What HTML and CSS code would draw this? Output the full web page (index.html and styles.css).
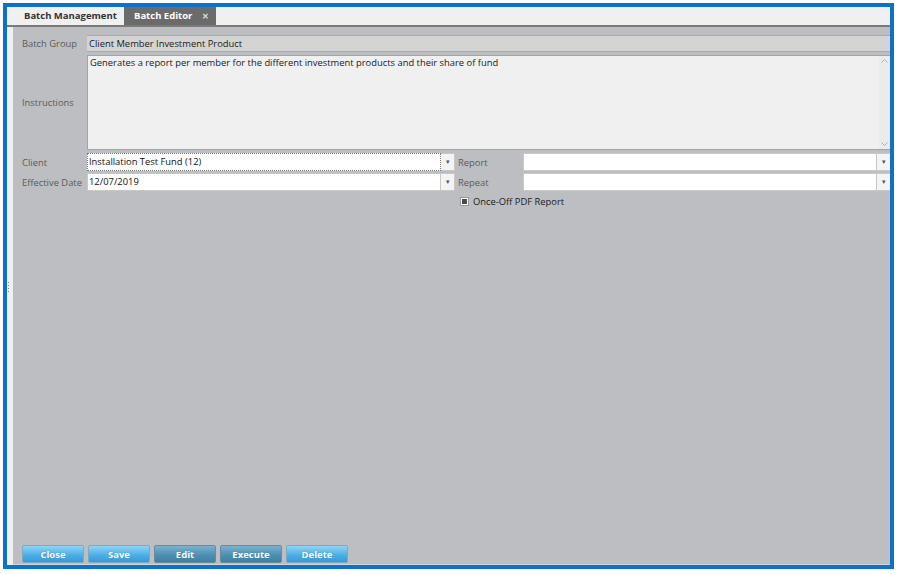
FILE: index.html
```html
<!DOCTYPE html>
<html>
    <head>
        <meta charset="utf-8">
        <title>Batch Editor</title>
        <link rel="stylesheet" href="styles.css">
    </head>
    <body>
        <div class="frame">
            <div class="tabbar">
                <div class="tab">Batch Management</div>
                <div class="tab active">Batch Editor<span class="tab-close">&#x2715;</span></div>
            </div>
            <div class="main">
                <div class="splitter">
                    <span class="grip"></span>
                </div>
                <div class="content">
                    <div class="form">
                        <div class="row">
                            <label class="lbl">Batch Group</label>
                            <div class="readonly">Client Member Investment Product</div>
                        </div>
                        <div class="row tall">
                            <label class="lbl">Instructions</label>
                            <div class="memo">
                                <div class="memo-text">Generates a report per member for the different investment products and their share of fund</div>
                                <div class="scroll">
                                    <svg class="arrow" width="7" height="4" viewBox="0 0 7 4"><path d="M0.5 3.5 L3.5 0.5 L6.5 3.5" fill="none" stroke="#b0b0b0"/></svg>
                                    <svg class="arrow" width="7" height="4" viewBox="0 0 7 4"><path d="M0.5 0.5 L3.5 3.5 L6.5 0.5" fill="none" stroke="#b0b0b0"/></svg>
                                </div>
                            </div>
                        </div>
                        <div class="row pair">
                            <div class="half">
                                <label class="lbl">Client</label>
                                <div class="combo">
                                    <div class="combo-input focused">Installation Test Fund (12)</div>
                                    <div class="combo-btn">&#x25BE;</div>
                                </div>
                            </div>
                            <div class="half">
                                <label class="lbl">Report</label>
                                <div class="combo">
                                    <div class="combo-input"></div>
                                    <div class="combo-btn">&#x25BE;</div>
                                </div>
                            </div>
                        </div>
                        <div class="row pair">
                            <div class="half">
                                <label class="lbl">Effective Date</label>
                                <div class="combo">
                                    <div class="combo-input">12/07/2019</div>
                                    <div class="combo-btn">&#x25BE;</div>
                                </div>
                            </div>
                            <div class="half">
                                <label class="lbl">Repeat</label>
                                <div class="combo">
                                    <div class="combo-input"></div>
                                    <div class="combo-btn">&#x25BE;</div>
                                </div>
                            </div>
                        </div>
                        <div class="check-row">
                            <span class="check"><span class="check-mark"></span></span>
                            <span class="check-label">Once-Off PDF Report</span>
                        </div>
                    </div>
                    <div class="actions">
                        <button class="btn">Close</button>
                        <button class="btn">Save</button>
                        <button class="btn dim">Edit</button>
                        <button class="btn dim">Execute</button>
                        <button class="btn">Delete</button>
                    </div>
                </div>
            </div>
        </div>
    </body>
</html>
```

FILE: styles.css
```css
body {
    margin: 0;
    background: #ffffff;
    font-family: "Open Sans", "Noto Sans", sans-serif;
    font-size: 9.4px;
}
.frame {
    margin: 3px 4px 5px 3px;
    border: 4px solid #0b71c9;
    height: 558px;
    display: flex;
    flex-direction: column;
}
.tabbar {
    height: 18px;
    background: #f0f0f0;
    border-bottom: 2px solid #7a7a7a;
    display: flex;
    padding-left: 7px;
}
.tab {
    font-weight: bold;
    font-size: 9.5px;
    color: #333333;
    line-height: 18px;
    padding-left: 10px;
    width: 100px;
    white-space: nowrap;
}
.tab.active {
    background: #6b6b6b;
    color: #ffffff;
    width: 82px;
}
.tab-close {
    font-size: 8px;
    margin-left: 10px;
    color: #e0e0e0;
}
.main {
    flex: 1;
    display: flex;
}
.splitter {
    width: 6px;
    background: #f0f0f0;
    position: relative;
}
.grip {
    position: absolute;
    left: 1px;
    top: 255px;
    width: 1px;
    height: 12px;
    background: repeating-linear-gradient(#8a8a8a 0 1px, transparent 1px 3px);
}
.content {
    flex: 1;
    background: #bdbec2;
    border-bottom: 1px solid #d4d4d6;
    display: flex;
    flex-direction: column;
    padding: 8px 0 1px 9px;
    overflow: hidden;
}
.form {
    display: flex;
    flex-direction: column;
    gap: 3px;
}
.row {
    display: flex;
    align-items: center;
    height: 17px;
}
.row.tall {
    height: 95px;
}
.row.pair {
    height: 18px;
    gap: 3px;
    margin-bottom: -1px;
}
.lbl {
    width: 65px;
    flex-shrink: 0;
    color: #5a5a5c;
    white-space: nowrap;
}
.readonly {
    flex: 1;
    height: 15px;
    line-height: 15px;
    background: #d4d4d4;
    border-top: 1px solid #a9a9ab;
    border-bottom: 1px solid #a9a9ab;
    padding-left: 2px;
    color: #1a1a1a;
}
.memo {
    flex: 1;
    height: 93px;
    background: #f0f0f0;
    border: 1px solid #a4a4a6;
    border-right: none;
    display: flex;
}
.memo-text {
    flex: 1;
    padding: 0 2px;
    color: #1a1a1a;
}
.scroll {
    width: 11px;
    background: #ebebeb;
    display: flex;
    flex-direction: column;
    justify-content: space-between;
    align-items: center;
    padding: 3px 0;
}
.half {
    width: 433px;
    flex-shrink: 0;
    display: flex;
    align-items: center;
}
.combo {
    flex: 1;
    display: flex;
    height: 18px;
}
.combo-input {
    flex: 1;
    background: #ffffff;
    border: 1px solid #c8c8c8;
    line-height: 16px;
    padding-left: 1px;
    color: #111111;
}
.combo-input.focused {
    border: 1px dotted #7a7a7a;
}
.combo-btn {
    width: 13px;
    background: #f4f4f4;
    border: 1px solid #c8c8c8;
    border-left: none;
    color: #555555;
    font-size: 7px;
    line-height: 16px;
    text-align: center;
}
.check-row {
    display: flex;
    align-items: center;
    margin-left: 438px;
    margin-top: 2px;
    gap: 4px;
}
.check {
    width: 7px;
    height: 7px;
    background: #ffffff;
    border: 1px solid #9a9a9a;
    display: flex;
    align-items: center;
    justify-content: center;
}
.check-mark {
    width: 5px;
    height: 5px;
    background: #4a4a4a;
}
.check-label {
    color: #1a1a1a;
}
.actions {
    margin-top: auto;
    display: flex;
    gap: 4px;
}
.btn {
    width: 62px;
    height: 18px;
    border: 1px solid #7fa8c4;
    border-radius: 2px;
    background: linear-gradient(#8fd4f6, #4fb0e6 55%, #3399d6);
    color: #ffffff;
    font-family: "Open Sans", "Noto Sans", sans-serif;
    font-weight: bold;
    font-size: 9.5px;
    padding: 0;
    text-shadow: 0 0 1px #3a7aa8;
}
.btn.dim {
    border-color: #6b8aa0;
    background: linear-gradient(#7cb2cf, #4f8fb2 55%, #3f7f9f);
}
```
